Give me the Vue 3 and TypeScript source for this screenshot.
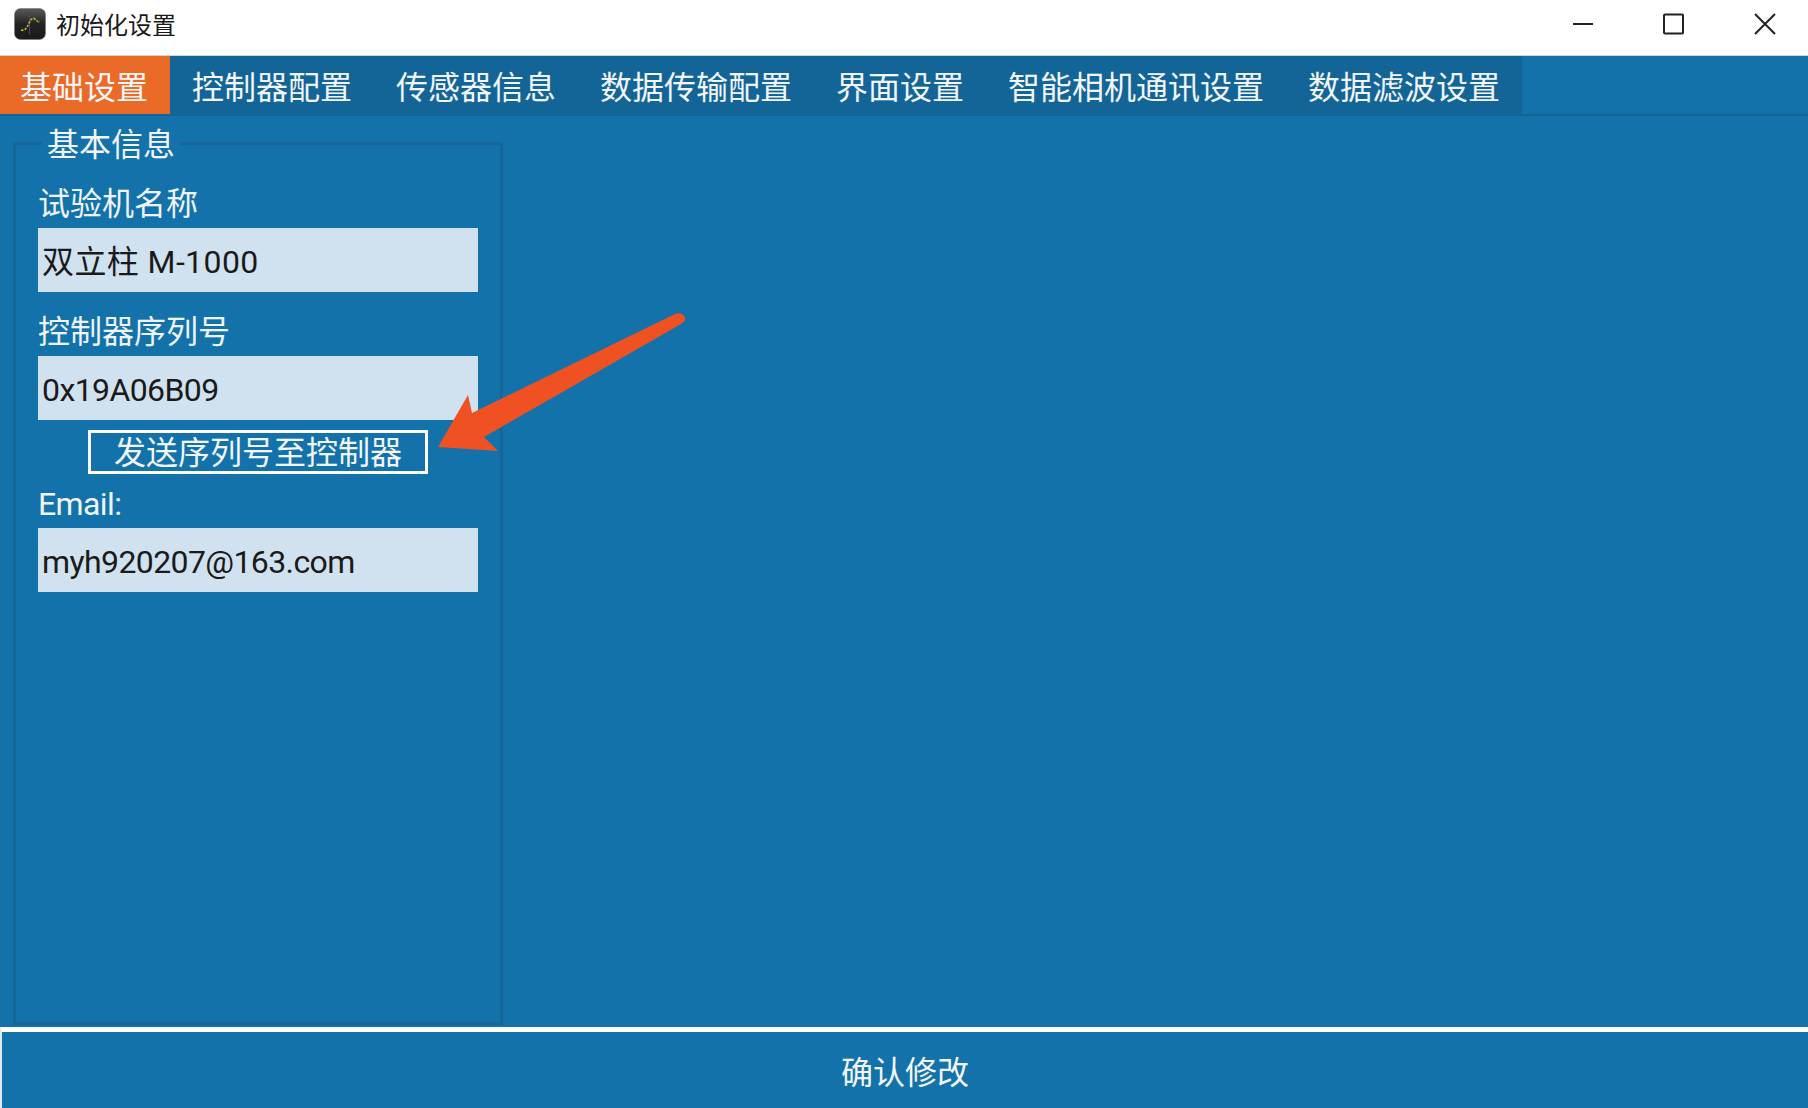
<template>
  <div class="window">
    <header class="titlebar">
      <svg class="app-icon" viewBox="0 0 32 32" width="32" height="32">
        <defs>
          <linearGradient id="iconBg" x1="0" y1="0" x2="0" y2="1">
            <stop offset="0" stop-color="#5a5a5a" />
            <stop offset="0.5" stop-color="#232323" />
            <stop offset="1" stop-color="#1a1a1a" />
          </linearGradient>
        </defs>
        <rect x="0.5" y="0.5" width="31" height="31" rx="6" fill="url(#iconBg)" stroke="#777" stroke-width="0.6" />
        <path d="M15.5 6V26" stroke="#5b3a78" stroke-width="1.2" fill="none" />
        <path d="M7 22C11 23 13 20 15 15C17 11 19 9 21 11C23 13 24 14 26 14" stroke="#c6c31c" stroke-width="1.5" stroke-dasharray="2.5 1.2" fill="none" />
      </svg>
      <span class="title">初始化设置</span>
      <div class="win-controls">
        <svg class="ctl" viewBox="0 0 22 22" width="22" height="22">
          <path d="M3 11H23" stroke="#222" stroke-width="2" />
        </svg>
        <svg class="ctl" viewBox="0 0 22 22" width="22" height="22">
          <rect x="2" y="1.5" width="19" height="19" rx="1" fill="none" stroke="#222" stroke-width="2" />
        </svg>
        <svg class="ctl" viewBox="0 0 22 22" width="22" height="22">
          <path d="M1 1L21 21M21 1L1 21" stroke="#222" stroke-width="2" />
        </svg>
      </div>
    </header>

    <nav class="tabbar">
      <div class="tabs">
        <div v-for="(tab, i) in tabs" :key="tab" class="tab" :class="{ active: i === activeTab }" @click="activeTab = i">
          {{ tab }}
        </div>
      </div>
    </nav>

    <main class="content">
      <fieldset class="group">
        <legend class="group-title">基本信息</legend>
        <label class="field-label">试验机名称</label>
        <div class="field wide">{{ machineName }}</div>
        <label class="field-label second">控制器序列号</label>
        <div class="field tight">{{ serial }}</div>
        <button class="send-btn" type="button">发送序列号至控制器</button>
        <label class="field-label email tight">Email:</label>
        <div class="field tight">{{ email }}</div>
      </fieldset>

      <!-- annotation arrow drawn over the screenshot -->
      <svg class="arrow" viewBox="0 0 260 150" width="260" height="150">
        <path
          d="M0 134L30 82L34 100L237 1C241 -1 245 1 247 4C248 7 246 9 243 11L46 124L60 138Z"
          fill="#f05123"
        />
      </svg>
    </main>

    <button class="confirm" type="button">确认修改</button>
  </div>
</template>

<script setup lang="ts">
import { ref } from 'vue'

const tabs = [
  '基础设置',
  '控制器配置',
  '传感器信息',
  '数据传输配置',
  '界面设置',
  '智能相机通讯设置',
  '数据滤波设置'
]

const activeTab = ref(0)
const machineName = ref('双立柱 M-1000')
const serial = ref('0x19A06B09')
const email = ref('myh920207@163.com')
</script>

<style>
html,
body {
  margin: 0;
  background: #fff;
}
</style>

<style scoped>
.window {
  display: flex;
  flex-direction: column;
  width: 1808px;
  height: 1108px;
  overflow: hidden;
  background: #fff;
  font-family: Roboto, "Noto Sans CJK SC", sans-serif;
}

.titlebar {
  display: flex;
  align-items: center;
  flex: none;
  box-sizing: border-box;
  height: 56px;
  padding: 0 32px 8px 14px;
  border-bottom: 1px solid #c9d6df;
}

.app-icon {
  flex: none;
}

.title {
  margin-left: 10px;
  font-size: 24px;
  color: #1a1a1a;
}

.win-controls {
  display: flex;
  align-items: center;
  gap: 70px;
  margin-left: auto;
}

.ctl {
  display: block;
  overflow: visible;
}

.tabbar {
  flex: none;
  display: flex;
  height: 58px;
  background: #1372a9;
  border-bottom: 2px solid #136597;
}

.tabs {
  display: flex;
  background: #136597;
}

.tab {
  padding: 6px 22px 0;
  font-size: 32px;
  line-height: 52px;
  color: #f2f6f9;
  white-space: nowrap;
  cursor: pointer;
}

.tab:first-child {
  padding-left: 20px;
}

.tab.active {
  background: #ea6a28;
}

.content {
  position: relative;
  flex: 1;
  min-height: 0;
  box-sizing: border-box;
  padding: 4px 0 0 13px;
  background: #1372a9;
}

.group {
  box-sizing: border-box;
  display: flex;
  flex-direction: column;
  align-items: stretch;
  width: 490px;
  height: 905px;
  margin: 0;
  padding: 14px 22px 0;
  border: 3px solid #166699;
  min-width: 0;
}

.group-title {
  margin-left: 4px;
  padding: 4px 5px 0;
  font-size: 32px;
  line-height: 42px;
  color: #f2f6f9;
}

.field-label {
  display: block;
  height: 48px;
  font-size: 32px;
  line-height: 48px;
  color: #eef4f8;
}

.field-label.second {
  margin-top: 16px;
}

.field-label.email {
  margin-top: 6px;
}

.field {
  box-sizing: border-box;
  height: 64px;
  padding: 4px 0 0 4px;
  font-size: 32px;
  line-height: 61px;
  color: #1a1a1a;
  background: #d0e2ef;
}

.tight {
  letter-spacing: -0.6px;
}

.wide {
  letter-spacing: 0.4px;
}

.send-btn {
  box-sizing: border-box;
  align-self: center;
  width: 340px;
  height: 44px;
  margin-top: 10px;
  padding: 3px 0 0;
  font-family: inherit;
  font-size: 32px;
  line-height: 35px;
  color: #f2f6f9;
  background: transparent;
  border: 3px solid #fff;
}

.arrow {
  position: absolute;
  left: 438px;
  top: 197px;
  overflow: visible;
}

.confirm {
  flex: none;
  box-sizing: border-box;
  width: 100%;
  height: 81px;
  padding: 0;
  font-family: inherit;
  font-size: 32px;
  color: #f2f6f9;
  background: #1372a9;
  border: 0;
  border-top: 5px solid #fff;
  border-left: 2px solid #dfe8ee;
}
</style>
